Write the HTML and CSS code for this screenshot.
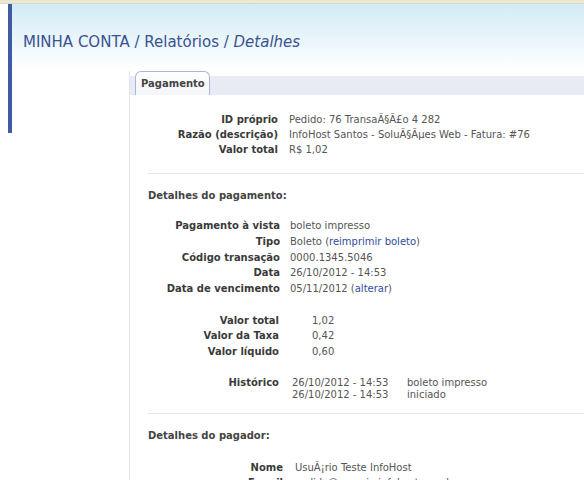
FILE: index.html
```html
<!DOCTYPE html>
<html lang="pt">
<head>
<meta charset="utf-8">
<title>Detalhes</title>
<link rel="stylesheet" href="styles.css">
</head>
<body>
<div class="topbar"></div>
<div class="wrap">
  <div class="accent"></div>
  <div class="main">
    <h1 class="title">MINHA CONTA / Relatórios / <em>Detalhes</em></h1>
    <div class="panel">
      <div class="tabs"><div class="tab">Pagamento</div></div>
      <div class="body">
        <div class="grid g1">
          <div class="lbl">ID próprio</div><div class="val">Pedido: 76 TransaÃ§Ã£o 4 282</div>
          <div class="lbl">Razão (descrição)</div><div class="val">InfoHost Santos - SoluÃ§Ãµes Web - Fatura: #76</div>
          <div class="lbl">Valor total</div><div class="val">R$ 1,02</div>
        </div>
        <hr class="sep">
        <div class="heading">Detalhes do pagamento:</div>
        <div class="grid g2">
          <div class="lbl">Pagamento à vista</div><div class="val">boleto impresso</div>
          <div class="lbl">Tipo</div><div class="val">Boleto (<a class="lnk" href="#">reimprimir boleto</a>)</div>
          <div class="lbl">Código transação</div><div class="val">0000.1345.5046</div>
          <div class="lbl">Data</div><div class="val">26/10/2012 - 14:53</div>
          <div class="lbl">Data de vencimento</div><div class="val">05/11/2012 (<a class="lnk" href="#">alterar</a>)</div>
        </div>
        <div class="grid g3">
          <div class="lbl">Valor total</div><div class="val">1,02</div>
          <div class="lbl">Valor da Taxa</div><div class="val">0,42</div>
          <div class="lbl">Valor líquido</div><div class="val">0,60</div>
        </div>
        <div class="grid g4">
          <div class="lbl">Histórico</div>
          <div class="hist">
            <span>26/10/2012 - 14:53</span><span>boleto impresso</span>
            <span>26/10/2012 - 14:53</span><span>iniciado</span>
          </div>
        </div>
        <hr class="sep sep2">
        <div class="heading">Detalhes do pagador:</div>
        <div class="grid g5">
          <div class="lbl">Nome</div><div class="val">UsuÃ¡rio Teste InfoHost</div>
          <div class="lbl">E-mail</div><div class="val">cadido@usuario.infohost.com.br</div>
        </div>
      </div>
    </div>
  </div>
</div>
</body>
</html>
```
FILE: styles.css
```css
html, body {
  margin: 0;
  padding: 0;
  background: #fff;
  font-family: "DejaVu Sans", Verdana, sans-serif;
  font-size: 10px;
  color: #555;
  overflow: hidden;
}
.topbar {
  height: 3px;
  background: #ebe7d5;
  border-bottom: 1px solid #dcd8c4;
}
.wrap {
  display: flex;
  margin-left: 8px;
  align-items: flex-start;
}
.accent {
  width: 4px;
  height: 129px;
  background: #3f5ba3;
  flex-shrink: 0;
}
.main {
  flex: 1;
  background: linear-gradient(to bottom, #d2ebf4 0, #e6f4f9 30px, #ffffff 66px) no-repeat;
  background-size: 100% 70px;
  padding-top: 28px;
}
.title {
  margin: 0 0 19px 11px;
  font-size: 15px;
  line-height: 20px;
  font-weight: normal;
  color: #3a5193;
}
.title em {
  font-style: italic;
}
.panel {
  margin-left: 117px;
  border-left: 1px solid #e4e4e8;
  min-height: 500px;
}
.tabs {
  display: flex;
  padding-left: 5px;
  background: linear-gradient(to bottom, #ffffff 5px, #e9ebf4 5px);
}
.tab {
  height: 23px;
  line-height: 23px;
  padding: 0 4px 0 5px;
  border: 1px solid #a9b5da;
  border-bottom: none;
  border-radius: 6px 6px 0 0;
  background: linear-gradient(to bottom, #ffffff, #f4f5fa);
  font-weight: bold;
  color: #444;
}
.body {
  padding-top: 17px;
}
.grid {
  display: grid;
  grid-template-columns: 148px auto;
  column-gap: 11px;
  line-height: 15px;
  justify-content: start;
}
.lbl {
  text-align: right;
  font-weight: bold;
  color: #3a3a3a;
  white-space: nowrap;
}
.val {
  white-space: nowrap;
  color: #555;
}
.lnk {
  color: #2f4d9c;
  text-decoration: none;
}
.sep {
  border: none;
  border-top: 1px solid #e3e3f1;
  margin: 16px 0 14px 18px;
  height: 0;
}
.sep2 {
  margin-top: 13px;
  margin-bottom: 14px;
}
.heading {
  margin-left: 18px;
  font-weight: bold;
  color: #444;
  line-height: 15px;
}
.g2 {
  margin-top: 15px;
  line-height: 15.8px;
  column-gap: 10px;
  grid-template-columns: 150px auto;
}
.g3 {
  margin-top: 16px;
  line-height: 15.5px;
  column-gap: 33px;
  grid-template-columns: 149px auto;
}
.g4 {
  margin-top: 18px;
  grid-template-columns: 149px auto;
  column-gap: 13px;
}
.g4 .lbl {
  line-height: 12px;
}
.hist {
  display: grid;
  grid-template-columns: 115px auto;
  line-height: 11.5px;
  color: #555;
  white-space: nowrap;
}
.g5 {
  margin-top: 17px;
  grid-template-columns: 153px auto;
  column-gap: 12px;
}
```
